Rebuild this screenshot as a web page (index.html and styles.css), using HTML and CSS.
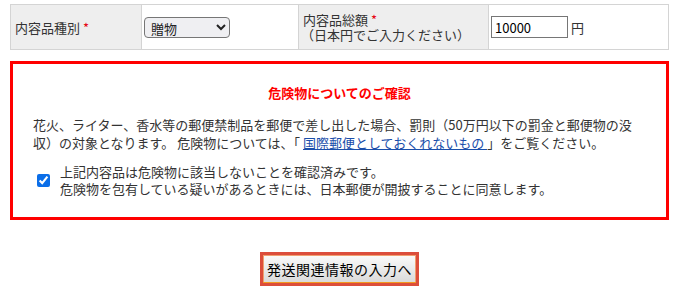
FILE: index.html
```html
<!DOCTYPE html>
<html lang="ja">
  <head>
    <meta charset="UTF-8" />
    <meta name="viewport" content="width=device-width, initial-scale=1.0" />
    <title>内容品の入力</title>
    <link rel="stylesheet" href="styles.css">
  </head>
  <body>
    <div class="page">
      <table class="item_table">
        <tr>
          <th class="col_kind">内容品種別 <span class="req">*</span></th>
          <td class="col_select">
            <select class="kind_select" name="kind">
              <option value="gift" selected>贈物</option>
              <option value="sample">商品見本</option>
              <option value="goods">販売品</option>
              <option value="other">その他</option>
            </select>
          </td>
          <th class="col_total">
            <span class="total_label">内容品総額 <span class="req">*</span></span>
            <span class="total_note">（日本円でご入力ください）</span>
          </th>
          <td class="col_amount">
            <input class="amount_input" type="text" name="amount" value="10000" /> 円
          </td>
        </tr>
      </table>

      <div class="danger_box">
        <h3 class="danger_title">危険物についてのご確認</h3>
        <p class="danger_text">
          花火、ライター、香水等の郵便禁制品を郵便で差し出した場合、罰則（50万円以下の罰金と郵便物の没収）の対象となります。
          危険物については、「 <a href="#" class="danger_link">国際郵便としておくれないもの </a>」をご覧ください。
        </p>
        <label class="confirm_row">
          <input class="confirm_check" type="checkbox" name="confirm" checked />
          <span class="confirm_text">
            上記内容品は危険物に該当しないことを確認済みです。<br />
            危険物を包有している疑いがあるときには、日本郵便が開披することに同意します。
          </span>
        </label>
      </div>

      <div class="next_area">
        <button class="next_button" type="button">発送関連情報の入力へ</button>
      </div>
    </div>
  </body>
</html>
```

FILE: styles.css
```css
body {
  margin: 0;
  font-family: "Noto Sans CJK JP", "Noto Sans", sans-serif;
  font-size: 13px;
  color: #333333;
  background: #ffffff;
}
.page {
  padding: 4px 9px 0 10px;
}
.item_table {
  width: 659px;
  border-collapse: collapse;
  table-layout: fixed;
}
.item_table th,
.item_table td {
  border: 1px solid #d4d4d4;
  height: 44px;
  padding: 0 4px;
  text-align: left;
  vertical-align: middle;
  font-weight: normal;
  line-height: 15px;
}
.item_table th {
  background: #eeeeee;
}
.item_table .col_select,
.item_table .col_amount {
  padding: 0 2px;
}
.col_kind {
  width: 122px;
}
.col_select {
  width: 152px;
}
.col_total {
  width: 181px;
}
.total_label,
.total_note {
  display: block;
}
.total_note {
  margin-left: -2px;
}
.req {
  color: #e60012;
}
.kind_select {
  width: 86px;
  height: 21px;
  font-family: inherit;
  font-size: 13px;
  color: #222222;
  padding: 0 2px;
  border: 1px solid #767676;
  border-radius: 4px;
  background: #efeff2;
}
.amount_input {
  width: 69px;
  height: 18px;
  padding: 1px 3px;
  border: 1px solid #767676;
  font-family: inherit;
  font-size: 13px;
  color: #000000;
}
.danger_box {
  margin-top: 11px;
  border: 3px solid #ff0000;
  padding: 20px 20px 20px 20px;
}
.danger_title {
  margin: 0 0 14px 0;
  text-align: center;
  font-size: 13px;
  line-height: 18px;
  color: #ff0000;
}
.danger_text {
  margin: 0;
  line-height: 18px;
}
.danger_link {
  color: #1a4eaa;
}
.confirm_row {
  display: flex;
  align-items: center;
  margin-top: 11px;
  padding-left: 4px;
  line-height: 17px;
}
.confirm_check {
  width: 13px;
  height: 13px;
  margin: 0 10px 0 0;
  accent-color: #0b6ee8;
}
.next_area {
  display: flex;
  justify-content: center;
  padding-top: 32px;
}
.next_button {
  height: 34px;
  padding: 0 4px;
  border: 3px solid #dc4e3b;
  box-shadow: inset 0 -1px 0 #f39a1e, inset 0 0 0 1px #f0a070;
  background: linear-gradient(#fbfbfb, #d9d9d9);
  font-family: inherit;
  font-size: 14px;
  letter-spacing: 0.5px;
  color: #000000;
}
```
